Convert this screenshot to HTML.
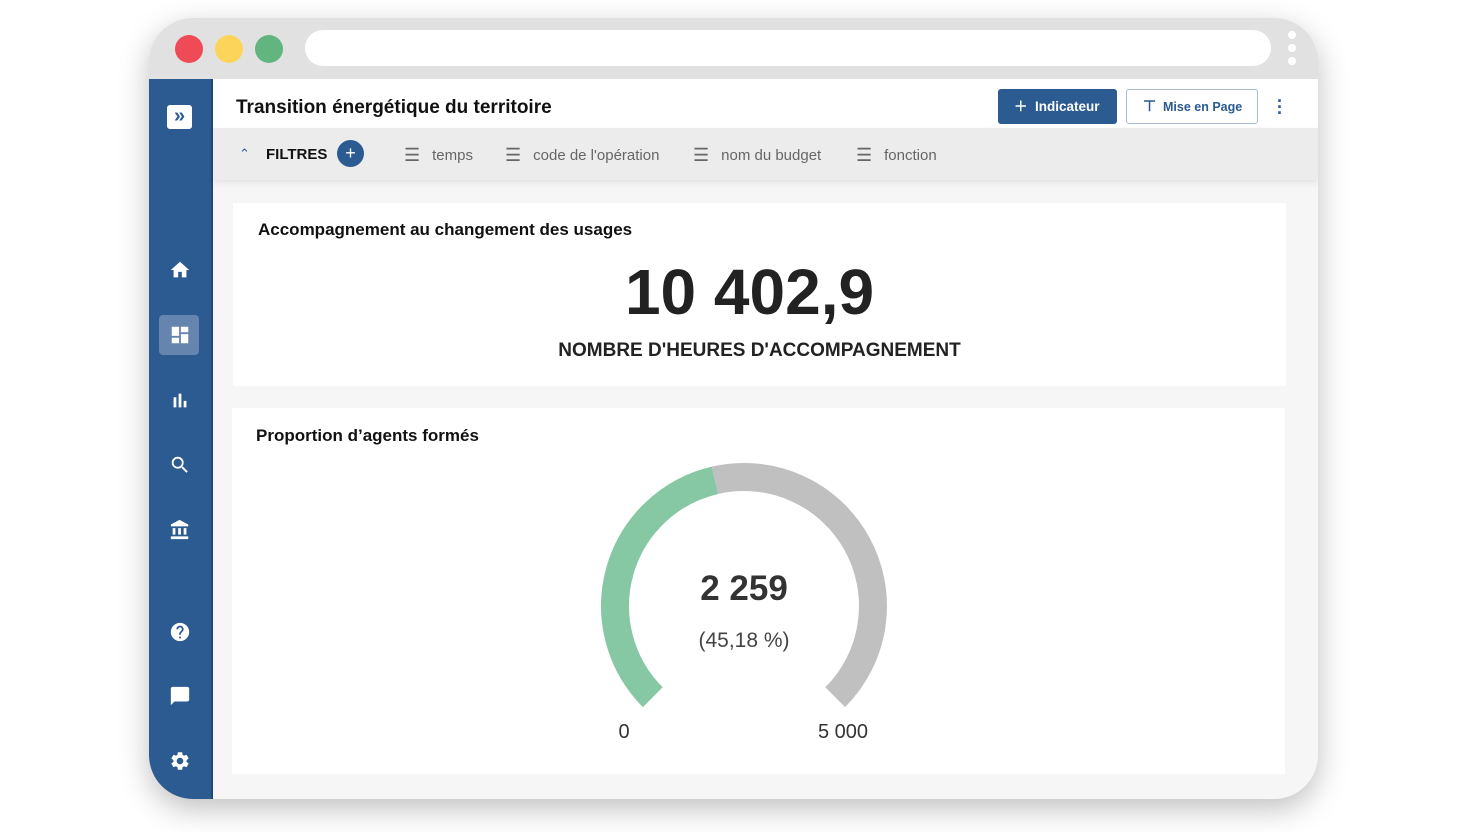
<!DOCTYPE html>
<html><head><meta charset="utf-8"><style>
*{margin:0;padding:0;box-sizing:border-box}
body{width:1480px;height:832px;background:#fff;font-family:"Liberation Sans",sans-serif;position:relative;overflow:hidden}
.win{position:absolute;left:149px;top:18px;width:1169px;height:781px;border-radius:44px;background:#e1e1e1;box-shadow:0 10px 30px rgba(0,0,0,.25);overflow:hidden}
.dot{position:absolute;top:17px;width:28px;height:28px;border-radius:50%}
.url{position:absolute;left:156px;top:12px;width:966px;height:36px;border-radius:18px;background:#fff}
.kd{position:absolute;left:1139px;width:8px;height:8px;border-radius:50%;background:#fff}
.side{position:absolute;left:0;top:61px;width:64px;height:720px;background:#2b5b91;border-right:2px solid #1f4778}
.main{position:absolute;left:64px;top:61px;width:1105px;height:720px;background:#f6f6f6}
.hdr{position:absolute;left:0;top:0;width:1105px;height:49px;background:#fff}
.fil{position:absolute;left:0;top:49px;width:1105px;height:52px;background:#ececec;box-shadow:0 3px 6px rgba(0,0,0,.08)}
.card{position:absolute;background:#fff}
.ic{position:absolute;left:20px}
.ft{position:absolute;top:17px;font-size:15px;color:#666;display:flex;align-items:center;gap:12px}
</style></head><body>
<div class="win">
 <div class="dot" style="left:26px;background:#ef4b57"></div>
 <div class="dot" style="left:66px;background:#fdd45a"></div>
 <div class="dot" style="left:106px;background:#63b57f"></div>
 <div class="url"></div>
 <div class="kd" style="top:13px"></div><div class="kd" style="top:26px"></div><div class="kd" style="top:39px"></div>
 <div class="side">
  <div style="position:absolute;left:18px;top:26px;width:25px;height:24px;background:#fff;border-radius:3px;color:#2b5b91;font-weight:bold;font-size:20px;text-align:center;line-height:23px">»</div>
  <svg class="ic" style="top:180px" width="22" height="22" viewBox="0 0 24 24"><path fill="#fff" d="M10 20v-6h4v6h5v-8h3L12 3 2 12h3v8z"/></svg>
  <div style="position:absolute;left:10px;top:236px;width:40px;height:40px;border-radius:4px;background:#6585ae"></div>
  <svg class="ic" style="top:245px" width="22" height="22" viewBox="0 0 24 24"><path fill="#fff" d="M3 13h8V3H3v10zm0 8h8v-6H3v6zm10 0h8V11h-8v10zm0-18v6h8V3h-8z"/></svg>
  <svg class="ic" style="top:310px" width="22" height="22" viewBox="0 0 24 24"><path fill="#fff" d="M5 9h3v11H5zm5.5-4h3v15h-3zM16 13h3v7h-3z"/></svg>
  <svg class="ic" style="top:375px" width="22" height="22" viewBox="0 0 24 24"><path fill="#fff" d="M15.5 14h-.79l-.28-.27A6.47 6.47 0 0 0 16 9.5 6.5 6.5 0 1 0 9.5 16c1.61 0 3.090-.59 4.23-1.57l.27.28v.79l5 4.99L20.49 19l-4.99-5zm-6 0C7.01 14 5 11.99 5 9.5S7.01 5 9.5 5 14 7.01 14 9.5 11.99 14 9.5 14z"/></svg>
  <svg class="ic" style="top:440px" width="22" height="22" viewBox="0 0 24 24"><path fill="#fff" d="M4 10v7h3v-7H4zm6 0v7h3v-7h-3zM2 22h19v-3H2v3zm14-12v7h3v-7h-3zm-4.5-9L2 6v2h19V6l-9.5-5z"/></svg>
  <svg class="ic" style="top:542px" width="22" height="22" viewBox="0 0 24 24"><path fill="#fff" d="M12 2C6.48 2 2 6.48 2 12s4.48 10 10 10 10-4.48 10-10S17.52 2 12 2zm1 17h-2v-2h2v2zm2.07-7.75l-.9.92C13.45 12.9 13 13.5 13 15h-2v-.5c0-1.1.45-2.1 1.17-2.830l1.24-1.26c.37-.36.59-.86.59-1.41 0-1.1-.9-2-2-2s-2 .9-2 2H8c0-2.21 1.79-4 4-4s4 1.79 4 4c0 .88-.36 1.68-.93 2.25z"/></svg>
  <svg class="ic" style="top:606px" width="22" height="22" viewBox="0 0 24 24"><path fill="#fff" d="M20 2H4c-1.1 0-2 .9-2 2v18l4-4h14c1.1 0 2-.9 2-2V4c0-1.1-.9-2-2-2z"/></svg>
  <svg class="ic" style="top:671px" width="22" height="22" viewBox="0 0 24 24"><path fill="#fff" d="M19.14 12.94c.04-.3.06-.61.06-.94 0-.32-.02-.64-.07-.94l2.03-1.58a.49.49 0 0 0 .12-.61l-1.92-3.32a.488.488 0 0 0-.59-.22l-2.39.96c-.5-.38-1.03-.7-1.62-.94l-.36-2.54a.484.484 0 0 0-.48-.41h-3.84c-.24 0-.43.17-.47.41l-.36 2.54c-.59.24-1.13.57-1.62.94l-2.39-.96c-.22-.08-.47 0-.59.22L2.74 8.87c-.12.21-.08.47.12.61l2.03 1.58c-.05.3-.09.63-.09.94s.02.64.07.94l-2.03 1.58a.49.49 0 0 0-.12.61l1.92 3.32c.12.22.37.29.59.22l2.39-.96c.5.38 1.03.7 1.62.94l.36 2.54c.05.24.24.41.48.41h3.84c.24 0 .44-.17.47-.41l.36-2.54c.59-.24 1.13-.56 1.62-.94l2.39.96c.22.08.47 0 .59-.22l1.92-3.32c.12-.22.07-.47-.12-.61l-2.01-1.58zM12 15.6c-1.98 0-3.6-1.62-3.6-3.6s1.62-3.6 3.6-3.6 3.6 1.62 3.6 3.6-1.62 3.6-3.6 3.6z"/></svg>
 </div>
 <div class="main">
  <div class="hdr">
   <div style="position:absolute;left:23px;top:18px;font-size:19px;font-weight:bold;color:#111">Transition énergétique du territoire</div>
   <div style="position:absolute;left:785px;top:10px;width:119px;height:35px;background:#2b5b91;border-radius:3px;color:#fff;font-size:13.5px;font-weight:bold;line-height:35px;padding-left:16px">＋&nbsp; Indicateur</div>
   <div style="position:absolute;left:913px;top:10px;width:132px;height:35px;border:1px solid #a8bbd3;border-radius:3px;color:#2b5b91;font-size:12.5px;font-weight:bold;line-height:33px;padding-left:16px"><span style="font-size:15px">⊤</span>&nbsp; Mise en Page</div>
   <div style="position:absolute;left:1064px;top:19px;color:#2b5b91;font-size:18px;line-height:6px;font-weight:bold">·<br>·<br>·</div>
  </div>
  <div class="fil">
   <div style="position:absolute;left:26px;top:18px;font-size:13px;color:#2b5b91">⌃</div>
   <div style="position:absolute;left:53px;top:18px;font-size:15px;font-weight:bold;color:#111">FILTRES</div>
   <div style="position:absolute;left:124px;top:12px;width:27px;height:27px;border-radius:50%;background:#2b5b91;color:#fff;text-align:center;line-height:26px;font-size:18px">+</div>
   <div class="ft" style="left:191px"><span style="font-size:18px">☰</span>temps</div>
   <div class="ft" style="left:292px"><span style="font-size:18px">☰</span>code de l'opération</div>
   <div class="ft" style="left:480px"><span style="font-size:18px">☰</span>nom du budget</div>
   <div class="ft" style="left:643px"><span style="font-size:18px">☰</span>fonction</div>
  </div>
  <div class="card" style="left:20px;top:124px;width:1053px;height:183px">
   <div style="position:absolute;left:25px;top:17px;font-size:17px;font-weight:bold;color:#111">Accompagnement au changement des usages</div>
   <div style="position:absolute;left:-10px;width:100%;top:52px;text-align:center;font-size:64px;font-weight:bold;color:#222">10 402,9</div>
   <div style="position:absolute;left:0;width:100%;top:137px;text-align:center;font-size:19px;font-weight:bold;color:#222">NOMBRE D'HEURES D'ACCOMPAGNEMENT</div>
  </div>
  <div class="card" style="left:19px;top:329px;width:1053px;height:366px">
   <div style="position:absolute;left:24px;top:18px;font-size:17px;font-weight:bold;color:#111">Proportion d’agents formés</div>
   <svg style="position:absolute;left:0;top:0" width="1053" height="366">
    <path d="M420.8 289.2 A129 129 0 0 1 483 72.3" fill="none" stroke="#86c8a4" stroke-width="28"/>
    <path d="M483 72.3 A129 129 0 0 1 603.2 289.2" fill="none" stroke="#c0c0c0" stroke-width="28"/>
    <text x="512" y="192" text-anchor="middle" font-family="Liberation Sans" font-weight="bold" font-size="35" fill="#333">2 259</text>
    <text x="512" y="239" text-anchor="middle" font-family="Liberation Sans" font-size="21" fill="#444">(45,18 %)</text>
    <text x="392" y="330" text-anchor="middle" font-family="Liberation Sans" font-size="20" fill="#333">0</text>
    <text x="611" y="330" text-anchor="middle" font-family="Liberation Sans" font-size="20" fill="#333">5 000</text>
   </svg>
  </div>
 </div>
</div>
</body></html>
